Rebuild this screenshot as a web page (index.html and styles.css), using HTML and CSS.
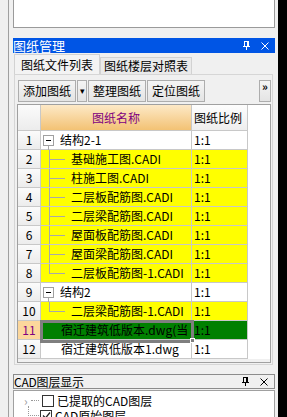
FILE: index.html
```html
<!DOCTYPE html>
<html lang="zh-CN">
<head>
  <meta charset="UTF-8" />
  <title>图纸管理</title>
  <link rel="stylesheet" href="styles.css">
</head>
<body>
  <div class="frame">
    <div class="rail"></div>

    <div class="dock">
      <div class="topbox"></div>

      <div class="titlebar">
        <span class="caption">图纸管理</span>
        <svg class="pin" width="7" height="9" viewBox="0 0 7 9">
          <rect x="1.5" y="0.5" width="3" height="5" fill="none" stroke="currentColor"/>
          <rect x="4" y="0" width="2" height="6" fill="currentColor"/>
          <rect x="0" y="5" width="7" height="1" fill="currentColor"/>
          <rect x="3" y="6" width="1" height="3" fill="currentColor"/>
        </svg>
        <svg class="close" width="8" height="8" viewBox="0 0 8 8">
          <path d="M0.5 0.5 L7.5 7.5 M7.5 0.5 L0.5 7.5" stroke="currentColor" stroke-width="1"/>
        </svg>
      </div>

      <div class="tabs">
        <div class="tab on">图纸文件列表</div>
        <div class="tab">图纸楼层对照表</div>
      </div>

      <div class="page">
        <div class="toolbar">
          <button class="btn">添加图纸</button>
          <button class="btn drop">▾</button>
          <button class="btn">整理图纸</button>
          <button class="btn">定位图纸</button>
          <button class="btn more">»</button>
        </div>

        <div class="sheet">
          <div class="row head">
            <div class="num"></div>
            <div class="name">图纸名称</div>
            <div class="ratio">图纸比例</div>
          </div>

          <div class="row">
            <div class="num">1</div>
            <div class="name"><span class="tog"></span><span class="label top">结构2-1</span></div>
            <div class="ratio">1:1</div>
          </div>
          <div class="row hl">
            <div class="num">2</div>
            <div class="name"><span class="branch"></span><span class="label">基础施工图.CADI</span></div>
            <div class="ratio">1:1</div>
          </div>
          <div class="row hl">
            <div class="num">3</div>
            <div class="name"><span class="branch"></span><span class="label">柱施工图.CADI</span></div>
            <div class="ratio">1:1</div>
          </div>
          <div class="row hl">
            <div class="num">4</div>
            <div class="name"><span class="branch"></span><span class="label">二层板配筋图.CADI</span></div>
            <div class="ratio">1:1</div>
          </div>
          <div class="row hl">
            <div class="num">5</div>
            <div class="name"><span class="branch"></span><span class="label">二层梁配筋图.CADI</span></div>
            <div class="ratio">1:1</div>
          </div>
          <div class="row hl">
            <div class="num">6</div>
            <div class="name"><span class="branch"></span><span class="label">屋面板配筋图.CADI</span></div>
            <div class="ratio">1:1</div>
          </div>
          <div class="row hl">
            <div class="num">7</div>
            <div class="name"><span class="branch"></span><span class="label">屋面梁配筋图.CADI</span></div>
            <div class="ratio">1:1</div>
          </div>
          <div class="row hl">
            <div class="num">8</div>
            <div class="name"><span class="branch last"></span><span class="label">二层板配筋图-1.CADI</span></div>
            <div class="ratio">1:1</div>
          </div>
          <div class="row">
            <div class="num">9</div>
            <div class="name"><span class="tog"></span><span class="label top">结构2</span></div>
            <div class="ratio">1:1</div>
          </div>
          <div class="row hl">
            <div class="num">10</div>
            <div class="name"><span class="branch last"></span><span class="label">二层梁配筋图-1.CADI</span></div>
            <div class="ratio">1:1</div>
          </div>
          <div class="row current">
            <div class="num">11</div>
            <div class="name sel"><span class="label plain">宿迁建筑低版本.dwg(当</span></div>
            <div class="ratio">1:1</div>
          </div>
          <div class="row">
            <div class="num">12</div>
            <div class="name"><span class="label plain">宿迁建筑低版本1.dwg</span></div>
            <div class="ratio">1:1</div>
          </div>
        </div>
      </div>

      <div class="subbar">
        <span class="caption">CAD图层显示</span>
        <svg class="pin" width="7" height="9" viewBox="0 0 7 9">
          <rect x="1.5" y="0.5" width="3" height="5" fill="none" stroke="currentColor"/>
          <rect x="4" y="0" width="2" height="6" fill="currentColor"/>
          <rect x="0" y="5" width="7" height="1" fill="currentColor"/>
          <rect x="3" y="6" width="1" height="3" fill="currentColor"/>
        </svg>
        <svg class="close" width="8" height="8" viewBox="0 0 8 8">
          <path d="M0.5 0.5 L7.5 7.5 M7.5 0.5 L0.5 7.5" stroke="currentColor" stroke-width="1"/>
        </svg>
      </div>

      <div class="layers">
        <div class="layer">
          <span class="arrow">›</span>
          <span class="dots"></span>
          <span class="check"></span>
          <span class="layer-name">已提取的CAD图层</span>
        </div>
        <div class="layer">
          <span class="elbow"></span>
          <span class="check on">
            <svg width="9" height="9" viewBox="0 0 9 9"><path d="M1 4.5 L3.5 7 L8 1.5" fill="none" stroke="#222" stroke-width="1.3"/></svg>
          </span>
          <span class="layer-name">CAD原始图层</span>
        </div>
      </div>
    </div>

    <div class="edge"></div>
  </div>
</body>
</html>
```

FILE: styles.css
```css
body {
  margin: 0;
  width: 287px;
  height: 417px;
  overflow: hidden;
  background: #f0f0f0;
  font-family: "Noto Sans CJK SC", "Liberation Sans", sans-serif;
  font-size: 12px;
  color: #000;
}

.frame {
  display: flex;
  height: 417px;
}

.rail {
  width: 8px;
  border-right: 1px solid #a0a0a0;
  margin-right: 4px;
}

.dock {
  width: 262px;
  display: flex;
  flex-direction: column;
  min-height: 0;
}

.edge {
  margin-left: 3px;
  width: 9px;
  background: #000;
}

.topbox {
  height: 27px;
  margin-top: -1px;
  border: 1px solid #9a9a9a;
  background: #fff;
  flex-shrink: 0;
}

/* dock title bars */
.titlebar,
.subbar {
  display: flex;
  align-items: center;
  height: 15px;
  flex-shrink: 0;
}

.titlebar {
  margin-top: 10px;
  background: #0055e5;
  color: #fff;
  font-size: 13px;
  line-height: 15px;
}

.caption {
  flex: 1;
  white-space: nowrap;
}

.pin {
  margin-right: 11px;
}

.close {
  margin-right: 6px;
}

/* tabs */
.tabs {
  display: flex;
  align-items: flex-end;
  height: 20px;
  margin-top: 1px;
  padding-left: 1px;
  flex-shrink: 0;
}

.tab {
  box-sizing: border-box;
  height: 17px;
  width: 92px;
  border: 1px solid #d2d2d2;
  border-bottom: none;
  background: #eaeaea;
  text-align: center;
  line-height: 16px;
}

.tab.on {
  height: 20px;
  width: 86px;
  background: #f3f3f3;
  line-height: 20px;
}

/* page with toolbar and grid */
.page {
  border: 1px solid #d6d6d6;
  margin: 0 2px 0 1px;
  padding: 5px 1px 1px 2px;
  flex-shrink: 0;
}

.toolbar {
  display: flex;
  gap: 1px;
  height: 22px;
  margin-bottom: 2px;
  padding-left: 1px;
}

.btn {
  box-sizing: border-box;
  height: 22px;
  width: 58px;
  padding: 0;
  border: 1px solid #adadad;
  background: linear-gradient(#f4f4f4, #e4e4e4);
  font-family: inherit;
  font-size: 12px;
  line-height: 20px;
  color: #000;
}

.btn.drop {
  width: 10px;
  font-size: 9px;
}

.btn.more {
  width: 12px;
  margin-left: auto;
  font-size: 11px;
  line-height: 11px;
  padding-bottom: 9px;
  font-weight: bold;
}

.sheet {
  border: 1px solid #a0a0a0;
  background: #f0f0f0;
  padding-bottom: 3px;
}

.row {
  display: flex;
  height: 19px;
  background: #fff;
  line-height: 18px;
}

.row > div {
  box-sizing: border-box;
  flex-shrink: 0;
  min-width: 0;
  border-right: 1px solid #c8c8c8;
  border-bottom: 1px solid #c8c8c8;
}

.num {
  width: 23px;
  text-align: center;
  background: linear-gradient(#fbfbfb, #ececec);
}

.name {
  width: 151px;
  display: flex;
  align-items: center;
  white-space: nowrap;
}

.ratio {
  width: 56px;
  padding-left: 2px;
}

.row.head {
  height: 26px;
  line-height: 25px;
}

.head .name {
  justify-content: center;
  color: #800080;
  background: linear-gradient(#fde9c7, #f3c274);
}

.head .ratio {
  background: linear-gradient(#fdfdfd, #eeeeee);
}

.row.hl .name,
.row.hl .ratio {
  background: #ffff00;
}

.row.current .num {
  background: #fcd79c;
  color: #800080;
}

.row.current .name,
.row.current .ratio {
  background: #008000;
}

/* selected cell frame and fill handle */
.name.sel {
  position: relative;
}

.name.sel::before {
  content: "";
  position: absolute;
  left: -1px;
  top: -1px;
  right: -3px;
  bottom: -4px;
  border: 3px solid #7f7f7f;
}

.name.sel::after {
  content: "";
  position: absolute;
  right: -4px;
  bottom: -4px;
  width: 3px;
  height: 3px;
  background: #7f7f7f;
  border: 1px solid #fff;
}

.label {
  overflow: hidden;
  min-width: 0;
  flex: 1;
}

.label.top {
  margin-left: 6px;
}

.label.plain {
  padding-left: 20px;
  margin-right: 2px;
}

/* tree toggles and lines */
.tog {
  position: relative;
  box-sizing: border-box;
  width: 11px;
  height: 11px;
  margin-left: 2px;
  border: 1px solid #a0a0a0;
  background: #fff;
  flex-shrink: 0;
}

.tog::after {
  content: "";
  position: absolute;
  left: 2px;
  top: 4px;
  width: 5px;
  height: 1px;
  background: #000;
}

.tog::before {
  content: "";
  position: absolute;
  left: 4px;
  top: 10px;
  width: 1px;
  height: 4px;
  background: #a8a8a8;
}

.branch {
  position: relative;
  align-self: stretch;
  width: 30px;
  flex-shrink: 0;
}

.branch::before {
  content: "";
  position: absolute;
  left: 8px;
  top: 0;
  bottom: 0;
  width: 1px;
  background: #a8a8a8;
}

.branch.last::before {
  bottom: 50%;
}

.branch::after {
  content: "";
  position: absolute;
  left: 8px;
  top: 50%;
  width: 16px;
  height: 1px;
  background: #a8a8a8;
}

/* layer panel */
.subbar {
  margin-top: 9px;
  box-sizing: border-box;
  border: 1px solid #8c8c8c;
  line-height: 13px;
  letter-spacing: -0.2px;
}

.layers {
  flex: 1;
  margin-top: 1px;
  border: 1px solid #a0a0a0;
  border-bottom: none;
  background: #fff;
  padding-top: 2px;
  overflow: hidden;
}

.layer {
  display: flex;
  align-items: center;
  height: 15px;
  line-height: 15px;
}

.arrow {
  width: 6px;
  margin-left: 10px;
  color: #9a9a9a;
  font-size: 12px;
}

.dots {
  width: 8px;
  margin: 0 3px 0 1px;
  border-top: 1px dotted #999;
}

.elbow {
  box-sizing: border-box;
  width: 11px;
  height: 10px;
  margin: -10px 1px 0 14px;
  border-left: 1px dotted #999;
  border-bottom: 1px dotted #999;
}

.check {
  box-sizing: border-box;
  width: 12px;
  height: 12px;
  border: 1px solid #333;
  background: #fff;
  display: flex;
  align-items: center;
  justify-content: center;
}

.layer-name {
  margin-left: 3px;
  white-space: nowrap;
}
```
